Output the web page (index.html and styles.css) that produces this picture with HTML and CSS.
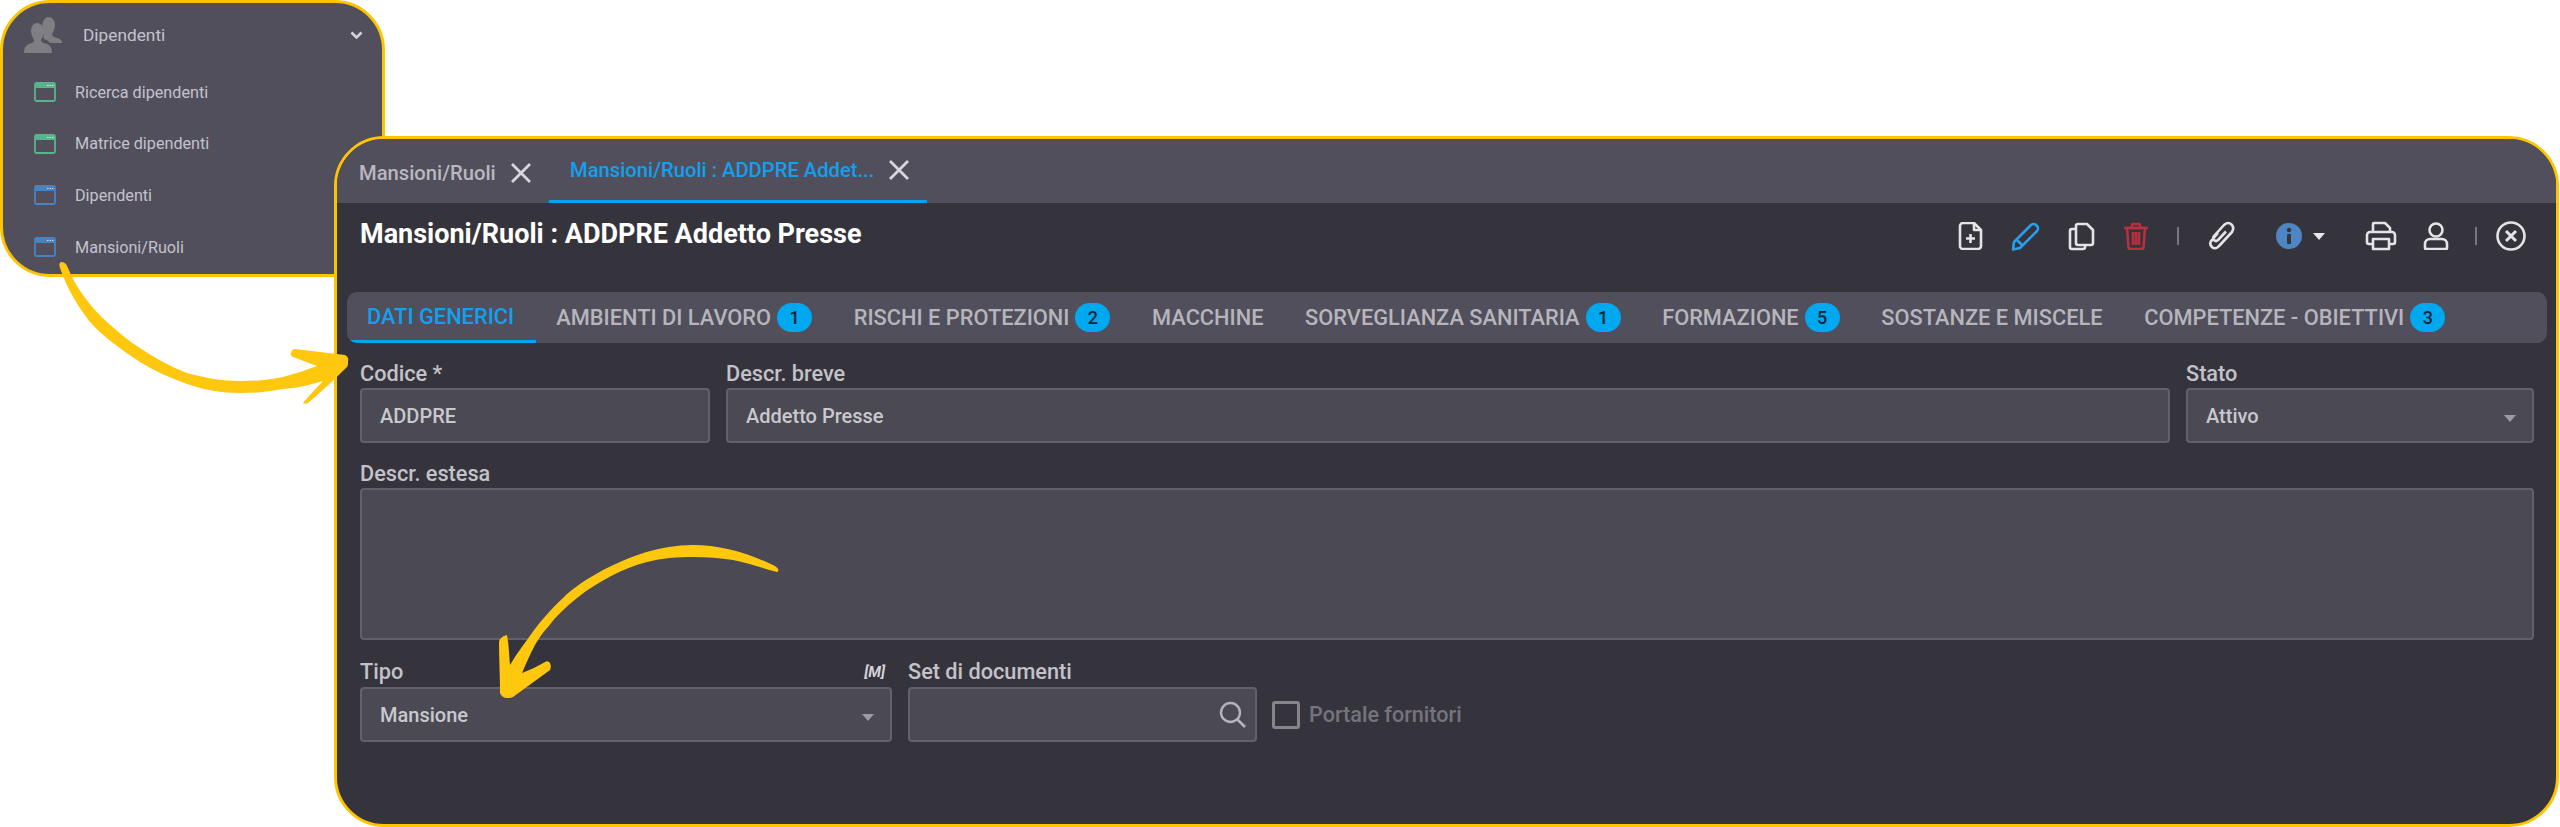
FILE: index.html
```html
<!DOCTYPE html>
<html lang="it">
<head>
    <meta charset="UTF-8">
    <title>Mansioni/Ruoli</title>
    <link rel="stylesheet" href="styles.css">
</head>
<body>
    <!-- menu laterale -->
    <div class="menu-window">
        <div class="menu-head">
            <svg class="menu-user" width="38" height="36" viewBox="0 0 38 36">
                <path fill="#7f7e82" d="M24 0c4 0 7 3 7 8 0 4-2 7-3 9 0 2 2 3 5 4 3 1 5 2 5 5H26c-1-2-3-3-6-4-1-1-1-3 0-4-3-4-2-9-1-13 1-3 3-5 5-5z"/>
                <path fill="#7f7e82" d="M13 6c4 0 7 4 7 8 0 4-2 7-3 9 0 2 2 3 6 4 3 1 5 4 5 9H0c0-5 2-8 5-9 4-1 5-2 5-4-1-2-3-5-3-9 0-4 2-8 6-8z"/>
            </svg>
            <span class="menu-title">Dipendenti</span>
            <svg class="menu-chevron" width="13" height="9" viewBox="0 0 13 9">
                <path d="M1.5 1.5l5 5 5-5" fill="none" stroke="#d5d4da" stroke-width="2.6"/>
            </svg>
        </div>
        <div class="menu-item">
            <svg class="win-icon win-green" width="22" height="20" viewBox="0 0 22 20">
                <rect x="1" y="1" width="20" height="18" rx="1.5" fill="none" stroke="currentColor" stroke-width="1.8"/>
                <rect x="1" y="1" width="20" height="5" fill="currentColor"/>
                <path d="M13 3.5h1.500M15.500 3.500h1.500M18 3.500h1.500" stroke="#d5e8df" stroke-width="1"/>
            </svg>
            <span>Ricerca dipendenti</span>
        </div>
        <div class="menu-item">
            <svg class="win-icon win-green" width="22" height="20" viewBox="0 0 22 20">
                <rect x="1" y="1" width="20" height="18" rx="1.5" fill="none" stroke="currentColor" stroke-width="1.8"/>
                <rect x="1" y="1" width="20" height="5" fill="currentColor"/>
                <path d="M13 3.5h1.500M15.500 3.500h1.500M18 3.500h1.500" stroke="#d5e8df" stroke-width="1"/>
            </svg>
            <span>Matrice dipendenti</span>
        </div>
        <div class="menu-item">
            <svg class="win-icon win-blue" width="22" height="20" viewBox="0 0 22 20">
                <rect x="1" y="1" width="20" height="18" rx="1.5" fill="none" stroke="currentColor" stroke-width="1.8"/>
                <rect x="1" y="1" width="20" height="5" fill="currentColor"/>
                <path d="M13 3.5h1.500M15.500 3.500h1.500M18 3.500h1.500" stroke="#c9d9ec" stroke-width="1"/>
            </svg>
            <span>Dipendenti</span>
        </div>
        <div class="menu-item">
            <svg class="win-icon win-blue" width="22" height="20" viewBox="0 0 22 20">
                <rect x="1" y="1" width="20" height="18" rx="1.5" fill="none" stroke="currentColor" stroke-width="1.8"/>
                <rect x="1" y="1" width="20" height="5" fill="currentColor"/>
                <path d="M13 3.5h1.500M15.500 3.500h1.500M18 3.500h1.500" stroke="#c9d9ec" stroke-width="1"/>
            </svg>
            <span>Mansioni/Ruoli</span>
        </div>
    </div>

    <!-- finestra principale -->
    <div class="main-window">
        <div class="doc-tabs">
            <div class="doc-tab">
                <span>Mansioni/Ruoli</span>
                <svg class="doc-close" width="22" height="22" viewBox="0 0 22 22">
                    <path d="M2 2l18 18M20 2L2 20" stroke="#d8d7dc" stroke-width="2.800" fill="none"/>
                </svg>
            </div>
            <div class="doc-tab doc-tab-active">
                <span>Mansioni/Ruoli : ADDPRE Addet...</span>
                <svg class="doc-close" width="22" height="22" viewBox="0 0 22 22">
                    <path d="M2 2l18 18M20 2L2 20" stroke="#d8d7dc" stroke-width="2.800" fill="none"/>
                </svg>
            </div>
        </div>

        <div class="page-head">
            <h1 class="page-title">Mansioni/Ruoli : ADDPRE Addetto Presse</h1>
            <div class="tools">
                <svg class="tool tool-white" width="25" height="28" viewBox="0 0 25 28">
                    <path d="M2 4a3 3 0 0 1 3-3h11l7 7v16a3 3 0 0 1-3 3H5a3 3 0 0 1-3-3z"/>
                    <path d="M16 1v7h7M12.500 12v9M8 16.500h9"/>
                </svg>
                <svg class="tool tool-blue" width="29" height="29" viewBox="0 0 29 29">
                    <path d="M3 20L20 3a3.500 3.500 0 0 1 5 0l1 1a3.500 3.500 0 0 1 0 5L9 26l-7 1.500z"/>
                    <path d="M6 18l5 5"/>
                </svg>
                <svg class="tool tool-white" width="27" height="29" viewBox="0 0 27 29">
                    <path d="M10 2h9l6 6v13a2 2 0 0 1-2 2H10a2 2 0 0 1-2-2V4a2 2 0 0 1 2-2z"/>
                    <path d="M8 7H4a2 2 0 0 0-2 2v16a2 2 0 0 0 2 2h11a2 2 0 0 0 2-2v-2"/>
                </svg>
                <svg class="tool tool-red" width="26" height="28" viewBox="0 0 26 28">
                    <path d="M1 6h24M9 6V3a1 1 0 0 1 1-1h6a1 1 0 0 1 1 1v3"/>
                    <path d="M4 6l1.500 19a2 2 0 0 0 2 2h11a2 2 0 0 0 2-2L22 6z"/>
                    <path d="M10 10v13M13 10v13M16 10v13"/>
                </svg>
                <span class="tool-sep tool-sep-a"></span>
                <svg class="tool tool-white tool-clip" width="30" height="30" viewBox="0 0 30 30">
                    <path d="M20 10.500l-8 8.500c-1.500 1.500-3 1-4 0s-1-2.500 0-4L18 4c2.500-2.500 5.500-2.500 7.500-.5s2 5 .5 7.500L13 25c-2 2.500-5 3-7 1s-2.500-4.500 0-7l6-7"/>
                </svg>
                <svg class="tool-info" width="26" height="26" viewBox="0 0 26 26">
                    <circle cx="13" cy="13" r="13" fill="#4d86c2"/>
                    <circle cx="13" cy="7" r="2.200" fill="#35343d"/>
                    <rect x="11" y="11" width="4" height="10" rx="1" fill="#35343d"/>
                </svg>
                <span class="tool-caret"></span>
                <svg class="tool tool-white tool-print" width="32" height="30" viewBox="0 0 32 30">
                    <path d="M8 11V3a1 1 0 0 1 1-1h11l5 5v4"/>
                    <path d="M7 23H4a2 2 0 0 1-2-2v-7a3 3 0 0 1 3-3h22a3 3 0 0 1 3 3v7a2 2 0 0 1-2 2h-3"/>
                    <path d="M8 18h16v10H8z"/>
                </svg>
                <svg class="tool tool-white tool-user" width="28" height="28" viewBox="0 0 28 28">
                    <circle cx="14" cy="8" r="6.500"/>
                    <path d="M3 26v-4a5 5 0 0 1 5-5h12a5 5 0 0 1 5 5v4a1 1 0 0 1-1 1H4a1 1 0 0 1-1-1z"/>
                </svg>
                <span class="tool-sep tool-sep-b"></span>
                <svg class="tool tool-white tool-close" width="30" height="30" viewBox="0 0 30 30">
                    <circle cx="15" cy="15" r="13.500"/>
                    <path d="M10 10l10 10M20 10L10 20" stroke-width="3"/>
                </svg>
            </div>
        </div>

        <div class="section-tabs">
            <div class="section-tab section-tab-active">DATI GENERICI</div>
            <div class="section-tab">AMBIENTI DI LAVORO <span class="badge">1</span></div>
            <div class="section-tab">RISCHI E PROTEZIONI <span class="badge">2</span></div>
            <div class="section-tab">MACCHINE</div>
            <div class="section-tab">SORVEGLIANZA SANITARIA <span class="badge">1</span></div>
            <div class="section-tab">FORMAZIONE <span class="badge">5</span></div>
            <div class="section-tab">SOSTANZE E MISCELE</div>
            <div class="section-tab">COMPETENZE - OBIETTIVI <span class="badge">3</span></div>
        </div>

        <div class="form">
            <div class="form-row">
                <div class="field field-code">
                    <div class="field-label">Codice *</div>
                    <div class="input">ADDPRE</div>
                </div>
                <div class="field field-grow">
                    <div class="field-label">Descr. breve</div>
                    <div class="input">Addetto Presse</div>
                </div>
                <div class="field field-state">
                    <div class="field-label">Stato</div>
                    <div class="input input-select">Attivo</div>
                </div>
            </div>
            <div class="field">
                <div class="field-label">Descr. estesa</div>
                <div class="input input-area"></div>
            </div>
            <div class="form-row form-row-last">
                <div class="field field-type">
                    <div class="field-label">Tipo <span class="field-flag">[M]</span></div>
                    <div class="input input-select">Mansione</div>
                </div>
                <div class="field field-docs">
                    <div class="field-label">Set di documenti</div>
                    <div class="input input-search">
                        <svg width="30" height="30" viewBox="0 0 30 30">
                            <circle cx="12.500" cy="12.500" r="9.500" fill="none" stroke="#b5b4ba" stroke-width="2.400"/>
                            <path d="M19.500 19.500l7.500 7.500" stroke="#b5b4ba" stroke-width="2.600"/>
                        </svg>
                    </div>
                </div>
                <div class="check-field">
                    <span class="checkbox"></span>
                    <span class="check-label">Portale fornitori</span>
                </div>
            </div>
        </div>
    </div>

    <!-- frecce gialle sopra le finestre -->
    <svg class="arrows" width="2560" height="827" viewBox="0 0 2560 827">
        <path fill="#ffc80f" d="M61 262C65 262 67 265 68 268C72 278 77 287 83 295C90 305 98 314 107 322C118 332 129 341 140 348C155 358 171 367 187 373C205 378 222 381 240 381C255 381 269 380 283 377C294 374 306 370 317 366C309 363 301 360 293 357C291 356 290 354 291 353C292 350 293 349 295 349L345 355C347 356 349 358 348 361C348 364 348 366 347 367C334 380 321 392 308 403C306 404 304 404 303 403C309 396 316 388 323 381C310 385 297 388 283 389C268 392 254 393 240 393C222 393 204 390 187 384C170 378 155 371 140 362C131 356 122 350 113 343C105 337 97 330 90 322C83 313 77 304 72 295C67 286 63 277 60 268C59 265 59 263 61 262Z"/>
        <path fill="#ffc80f" d="M773 565C748 553 720 545 693 545C660 545 630 556 603 570C585 580 573 588 563 598C550 610 540 622 532 633C525 643 517 653 510 665C509 655 509 645 507 635C503 636 500 638 499 642C499 659 500 676 500 693C501 696 504 698 507 698C509 698 511 698 513 697L550 670C551 668 551 665 550 663C548 661 547 661 545 662C538 666 530 670 522 673C526 664 530 654 535 645C539 638 543 632 548 627C556 616 566 607 577 598C588 589 600 582 613 575C623 570 635 565 647 562C662 558 677 557 693 557C707 557 720 558 733 560C748 563 762 568 777 572C778 572 779 570 778 569C777 567 775 566 773 565Z"/>
    </svg>
</body>
</html>
```
FILE: styles.css
```css
html, body {
    margin: 0;
    height: 100%;
    overflow: hidden;
    background: #ffffff;
}

body {
    font-family: 'Roboto', 'Liberation Sans', sans-serif;
    position: relative;
}

/* menu laterale */
.menu-window {
    position: absolute;
    left: 0;
    top: 0;
    width: 385px;
    height: 277px;
    box-sizing: border-box;
    background: #514f5c;
    border: 3px solid #ffc400;
    border-radius: 50px;
    padding: 14px 0 0 21px;
    color: #c4c2cc;
    font-size: 16.200px;
}

.menu-head {
    display: flex;
    align-items: center;
    height: 36px;
    margin-bottom: 29px;
    font-size: 17.300px;
}

.menu-title {
    margin-left: 21px;
}

.menu-chevron {
    margin-left: 185px;
}

.menu-item {
    display: flex;
    align-items: center;
    height: 20px;
    margin: 0 0 31.700px 10px;
    gap: 19px;
}

.win-green {
    color: #58b48a;
}

.win-blue {
    color: #4a82c0;
}

/* finestra principale */
.main-window {
    position: absolute;
    left: 334px;
    top: 136px;
    width: 2225px;
    height: 691px;
    box-sizing: border-box;
    background: #35343d;
    border: 3px solid #ffc400;
    border-radius: 50px;
    overflow: hidden;
}

.doc-tabs {
    display: flex;
    height: 64px;
    background: #514f5c;
    padding-left: 3px;
}

.doc-tab {
    display: flex;
    align-items: center;
    justify-content: space-between;
    box-sizing: border-box;
    padding: 3px 17px 0 19px;
    width: 209px;
    color: #b9b8bf;
    font-size: 20.200px;
    font-weight: 500;
    white-space: nowrap;
}

.doc-tab-active {
    width: 378px;
    color: #12a0ee;
    border-bottom: 3px solid #00a5ee;
    padding-top: 0;
    padding-left: 21px;
    padding-right: 17px;
}

.page-head {
    display: flex;
    align-items: center;
    height: 62px;
    margin-bottom: 27px;
    padding: 0 30px 0 23px;
}

.page-title {
    margin: 0;
    color: #ffffff;
    font-size: 27px;
    font-weight: 700;
}

.tools {
    display: flex;
    align-items: center;
    gap: 28px;
    margin-left: auto;
    padding-top: 4px;
}

.tool {
    fill: none;
    stroke-width: 2.600px;
    stroke-linejoin: round;
}

.tool path, .tool circle {
    fill: none;
    stroke: currentColor;
}

.tool-white {
    color: #e4e3e6;
}

.tool-blue {
    color: #2a9de8;
}

.tool-red {
    color: #b8303f;
}

.tool-sep {
    width: 2px;
    height: 18px;
    background: #77767e;
}

.tool-clip {
    margin-left: -1px;
}

.tool-info {
    margin-left: 12px;
}

.tool-caret {
    width: 0;
    height: 0;
    margin-left: -17px;
    border-left: 6.500px solid transparent;
    border-right: 6.500px solid transparent;
    border-top: 7px solid #e8e7ea;
}

.tool-print {
    margin-left: 12px;
}

.tool-user {
    margin-left: -3px;
}

.tool-sep-b {
    margin-left: -3px;
}

.tool-close {
    margin-left: -9px;
}

/* schede della pagina */
.section-tabs {
    display: flex;
    height: 51px;
    margin: 0 9px 0 10px;
    background: #504f5b;
    border-radius: 10px;
    overflow: hidden;
}

.section-tab {
    display: flex;
    align-items: center;
    gap: 6px;
    box-sizing: border-box;
    padding: 0 20px;
    margin-right: 1.600px;
    color: #b6b5bc;
    font-size: 21.800px;
    font-weight: 500;
    white-space: nowrap;
}

.section-tab-active {
    margin-left: 3px;
    margin-right: 0;
    padding: 0 22px 0 17px;
    color: #12a0ee;
    border-bottom: 3px solid #00a5ee;
}

.badge {
    display: inline-flex;
    align-items: center;
    justify-content: center;
    width: 35px;
    height: 29px;
    border-radius: 15px;
    background: #00a8f0;
    color: #0c2635;
    font-size: 18px;
}

/* modulo */
.form {
    display: flex;
    flex-direction: column;
    gap: 19px;
    padding: 19px 22px 0 23px;
}

.form-row {
    display: flex;
    gap: 16px;
}

.form-row-last {
    margin-top: 2px;
}

.field-code {
    width: 350px;
}

.field-grow {
    flex: 1;
}

.field-state {
    width: 348px;
}

.field-type {
    width: 532px;
}

.field-docs {
    width: 349px;
}

.field-label {
    display: flex;
    justify-content: space-between;
    height: 26px;
    line-height: 24px;
    color: #c3c2c8;
    font-size: 21.700px;
    font-weight: 500;
}

.form-row-last .field-label {
    line-height: 22px;
}

.field-flag {
    margin-right: 7px;
    font-size: 15px;
    font-style: italic;
    font-weight: 700;
    color: #d4d3d8;
}

.input {
    position: relative;
    display: flex;
    align-items: center;
    box-sizing: border-box;
    height: 55px;
    padding: 0 18px;
    background: #4a4954;
    border: 2px solid #62616b;
    border-radius: 4px;
    color: #c9c8cd;
    font-size: 20px;
    font-weight: 500;
}

.input-area {
    height: 152px;
}

.input-select::after {
    content: "";
    position: absolute;
    right: 16px;
    top: 25px;
    border-left: 6px solid transparent;
    border-right: 6px solid transparent;
    border-top: 7px solid #9c9ba2;
}

.input-search {
    justify-content: flex-end;
    padding: 0 7px;
}

.check-field {
    display: flex;
    align-items: center;
    gap: 9px;
    margin: 26px 0 0 -1px;
    height: 55px;
}

.checkbox {
    box-sizing: border-box;
    width: 28px;
    height: 28px;
    border: 3px solid #85848b;
    border-radius: 3px;
}

.check-label {
    color: #75747c;
    font-size: 21.600px;
    font-weight: 500;
}

.arrows {
    position: absolute;
    left: 0;
    top: 0;
    pointer-events: none;
}
```
